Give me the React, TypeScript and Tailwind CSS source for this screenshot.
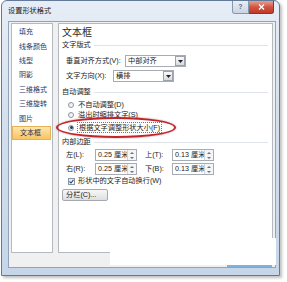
import React from "react";

function Select({ w, text }: { w: string; text: string }) {
  return (
    <div className={w + " h-[12px] border border-[#a7acb4] bg-white flex items-center"}>
      <span className="flex-1 pl-[2px] text-[7.2px] leading-[10px] text-[#222] whitespace-nowrap overflow-hidden">{text}</span>
      <span className="w-[10px] h-[10px] border border-[#9aa3ae] bg-gradient-to-b from-[#fafafa] to-[#d8dadd] flex items-center justify-center">
        <svg width="5" height="3" viewBox="0 0 5 3">
          <path d="M0 0H5L2.5 3Z" fill="#222" />
        </svg>
      </span>
    </div>
  );
}

function Spin({ value }: { value: string }) {
  return (
    <div className="w-[42px] h-[12px] border border-[#a7acb4] bg-white flex">
      <span className="w-[31px] pl-[2px] overflow-hidden whitespace-nowrap text-[7.2px] leading-[10px] text-[#222]">{value}</span>
      <span className="flex-1 flex flex-col border-l border-[#cfd3d8] bg-[#f4f5f6]">
        <span className="flex-1 flex items-center justify-center">
          <svg width="4" height="2" viewBox="0 0 4 2">
            <path d="M0 2H4L2 0Z" fill="#6a7380" />
          </svg>
        </span>
        <span className="flex-1 flex items-center justify-center">
          <svg width="4" height="2" viewBox="0 0 4 2">
            <path d="M0 0H4L2 2Z" fill="#6a7380" />
          </svg>
        </span>
      </span>
    </div>
  );
}

function Radio({ on }: { on?: boolean }) {
  return (
    <span className="w-[6px] h-[6px] rounded-full border border-[#8b96a3] bg-gradient-to-br from-[#e4e7ea] to-[#fdfdfd] flex items-center justify-center">
      {on ? <span className="w-[3px] h-[3px] rounded-full bg-[#1d3a70]" /> : null}
    </span>
  );
}

function Section({ label }: { label: string }) {
  return (
    <div className="h-[10px] flex items-center gap-[3px] pr-[4px]">
      <span className="text-[7.2px] leading-[10px] text-[#222] whitespace-nowrap">{label}</span>
      <span className="flex-1 h-px bg-[#dfe4ea]" />
    </div>
  );
}

export default function App() {
  const items = ["填充", "线条颜色", "线型", "阴影", "三维格式", "三维旋转", "图片", "文本框"];
  return (
    <div className="w-[287px] h-[282px] bg-white relative overflow-hidden font-['Liberation_Sans','Noto_Sans_CJK_SC',sans-serif]">
      <div className="ml-[1px] w-[279px] h-[276px] rounded-t-[6px] border border-[#63799a] bg-gradient-to-b from-[#e6edf6] via-[#d2deec] to-[#c6d6e8] flex flex-col shadow-[2px_2px_3px_rgba(0,0,0,0.25)]">
        <div className="h-[20px] flex items-start">
          <div className="pl-[6px] pt-[5px] text-[7.2px] leading-[10px] text-[#1b1b1b]">设置形状格式</div>
          <div className="ml-auto mr-[5px] flex">
            <div className="w-[17px] h-[13px] rounded-bl-[3px] border border-t-0 border-[#8497ad] bg-gradient-to-b from-[#e9eef4] to-[#c9d5e3] flex items-center justify-center text-[7px] leading-[8px] text-[#5d6d80] font-bold">?</div>
            <div className="w-[25px] h-[13px] rounded-br-[3px] border border-t-0 border-l-0 border-[#84372c] bg-gradient-to-b from-[#e4a093] via-[#d2543f] to-[#c0392b] flex items-center justify-center">
              <svg width="7" height="6" viewBox="0 0 7 6">
                <path d="M1 0.5L6 5.5M6 0.5L1 5.5" stroke="#fff" strokeWidth="1.4" />
              </svg>
            </div>
          </div>
        </div>
        <div className="ml-[6px] mr-[3px] mb-[7px] flex-1 bg-[#f0f0f0] border border-[#8fa3bb] flex items-start pl-[2px] pt-[1px] gap-[5px]">
          <div className="w-[42px] h-[230px] bg-white border border-[#b4b9c0] pt-[1px]">
            {items.map((t, i) => (
              <div
                key={t}
                className={
                  i === 7
                    ? "h-[14.4px] mr-px flex items-center pl-[7px] text-[7px] leading-[10px] text-[#1e3250] bg-gradient-to-b from-[#fde6a8] to-[#f8c463] border border-[#e3b25a] whitespace-nowrap"
                    : "h-[14.4px] flex items-center pl-[7px] text-[7px] leading-[10px] text-[#1e3a66] whitespace-nowrap"
                }
              >
                {t}
              </div>
            ))}
          </div>
          <div className="w-[215px] h-[230px] bg-white border border-[#b4b9c0] pl-[3px] pt-[3px] flex flex-col">
            <div className="h-[12px] flex items-center text-[10px] leading-[12px] text-[#2a2a2a]">文本框</div>
            <div className="mt-[1px]"><Section label="文字版式" /></div>
            <div className="mt-[5px] h-[12px] flex items-center pl-[4px]">
              <span className="w-[59px] text-[7.2px] leading-[10px] text-[#222] whitespace-nowrap">垂直对齐方式(V):</span>
              <Select w="w-[61px]" text="中部对齐" />
            </div>
            <div className="mt-[3px] h-[12px] flex items-center pl-[4px]">
              <span className="w-[47px] text-[7.2px] leading-[10px] text-[#222] whitespace-nowrap">文字方向(X):</span>
              <Select w="w-[61px]" text="横排" />
            </div>
            <div className="mt-[5px]"><Section label="自动调整" /></div>
            <div className="mt-[3px] h-[10px] flex items-center pl-[6px] gap-[4px]">
              <Radio />
              <span className="text-[7.2px] leading-[10px] text-[#222] whitespace-nowrap">不自动调整(D)</span>
            </div>
            <div className="h-[10px] flex items-center pl-[6px] gap-[4px]">
              <Radio />
              <span className="text-[7.2px] leading-[10px] text-[#222] whitespace-nowrap">溢出时缩排文字(S)</span>
            </div>
            <div className="mt-[2px] h-[11px] flex items-center pl-[6px] gap-[3px]">
              <Radio on />
              <span className="border border-dotted border-[#777] px-[1px] text-[7.2px] leading-[9px] text-[#222] whitespace-nowrap">根据文字调整形状大小(F)</span>
            </div>
            <div className="mt-[4px]"><Section label="内部边距" /></div>
            <div className="mt-[2px] h-[12px] flex items-center pl-[4px]">
              <span className="w-[29px] text-[7.2px] leading-[10px] text-[#222] whitespace-nowrap">左(L):</span>
              <Spin value="0.25 厘米" />
              <span className="ml-[8px] w-[27px] text-[7.2px] leading-[10px] text-[#222] whitespace-nowrap">上(T):</span>
              <Spin value="0.13 厘米" />
            </div>
            <div className="mt-[2px] h-[12px] flex items-center pl-[4px]">
              <span className="w-[29px] text-[7.2px] leading-[10px] text-[#222] whitespace-nowrap">右(R):</span>
              <Spin value="0.25 厘米" />
              <span className="ml-[8px] w-[27px] text-[7.2px] leading-[10px] text-[#222] whitespace-nowrap">下(B):</span>
              <Spin value="0.13 厘米" />
            </div>
            <div className="mt-[1px] h-[10px] flex items-center pl-[6px] gap-[3px]">
              <span className="w-[7px] h-[7px] border border-[#8b96a3] bg-gradient-to-br from-[#e4e7ea] to-[#fdfdfd] flex items-center justify-center">
                <svg width="5" height="5" viewBox="0 0 5 5">
                  <path d="M0.5 2.5L2 4L4.5 0.8" stroke="#2b4a7a" strokeWidth="1.1" fill="none" />
                </svg>
              </span>
              <span className="text-[7.2px] leading-[10px] text-[#222] whitespace-nowrap">形状中的文字自动换行(W)</span>
            </div>
            <div className="mt-[3px] w-[46px] h-[12px] rounded-[2px] border border-[#a5a9ae] bg-gradient-to-b from-[#f7f7f7] to-[#dedfe1] flex items-center pl-[3px] text-[7.2px] leading-[10px] text-[#222] whitespace-nowrap">
              分栏(C)...
            </div>
          </div>
        </div>
      </div>
      <div className="absolute left-[56px] top-[117px] w-[120px] h-[21px] rounded-[50%] border-[2.5px] border-[#bf2529] shadow-[0_0_1.5px_rgba(150,20,20,0.7)]" />
      <div className="absolute left-[110px] top-[238px] w-[166px] h-[27px] bg-white" />
      <div className="absolute left-[227px] top-[265px] w-[45px] h-[2px] bg-[#7fb1de]" />
    </div>
  );
}
